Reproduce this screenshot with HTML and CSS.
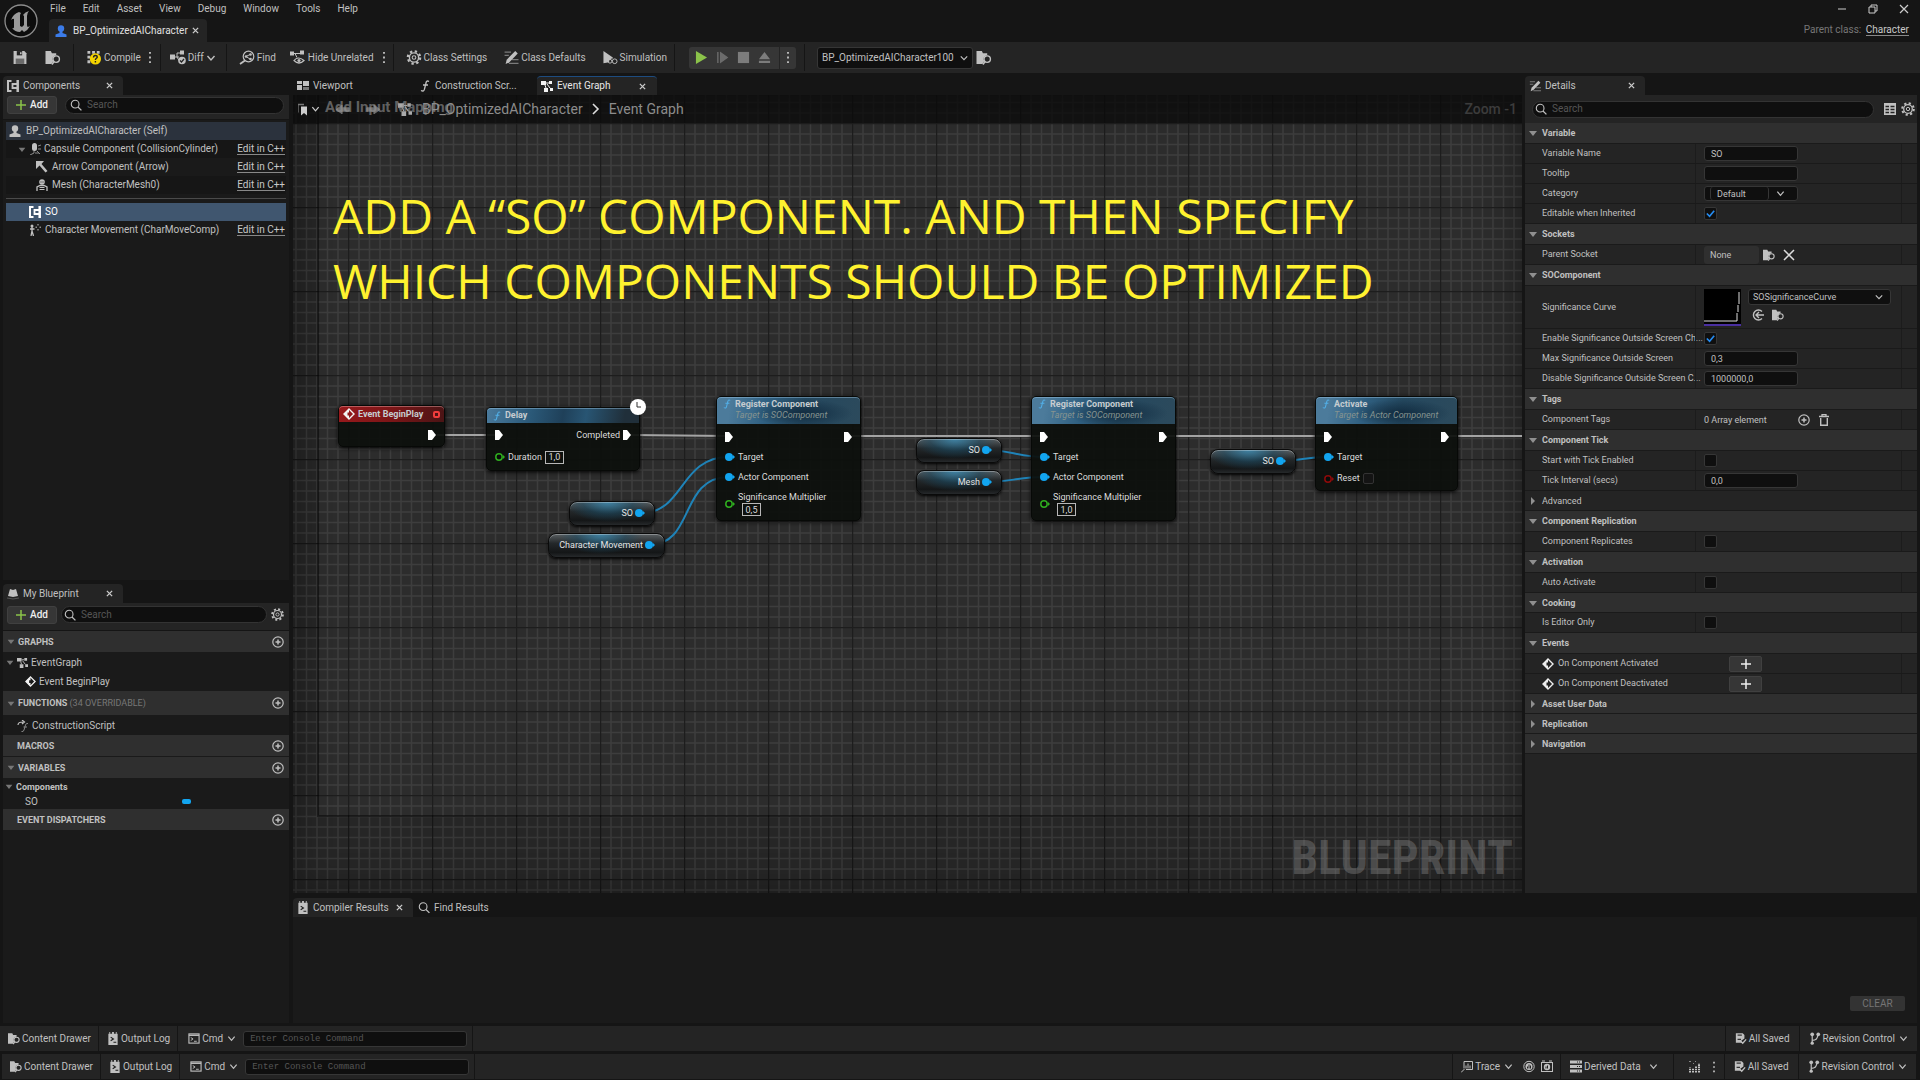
FILE: index.html
```html
<!DOCTYPE html>
<html lang="en">
<head>
    <meta charset="utf-8">
    <title>BP_OptimizedAICharacter</title>
    <link rel="stylesheet" href="styles.css">
</head>
<body>

<!-- Icon set -->
<svg class="icon-defs" aria-hidden="true">
    <defs>
        <symbol id="i-close" viewBox="0 0 8 8"><path d="M1 1l6 6M7 1l-6 6" stroke="currentColor" stroke-width="1.5" fill="none"/></symbol>
        <symbol id="i-chev" viewBox="0 0 10 10"><path d="M1.5 3l3.500 4 3.500-4" stroke="currentColor" stroke-width="1.400" fill="none"/></symbol>
        <symbol id="i-dots" viewBox="0 0 4 14"><path d="M1 1h2v2H1zM1 6h2v2H1zM1 11h2v2H1z" fill="currentColor"/></symbol>
        <symbol id="i-down" viewBox="0 0 8 6"><path d="M0 1h8L4 6z" fill="currentColor"/></symbol>
        <symbol id="i-right" viewBox="0 0 6 8"><path d="M1 0v8l4-4z" fill="currentColor"/></symbol>
        <symbol id="i-search" viewBox="0 0 14 14"><circle cx="6" cy="6" r="4.500" fill="none" stroke="currentColor" stroke-width="1.300"/><path d="M9.300 9.300l4 4" stroke="currentColor" stroke-width="1.500"/></symbol>
        <symbol id="i-plus" viewBox="0 0 10 10"><path d="M5 0v10M0 5h10" stroke="currentColor" stroke-width="1.500"/></symbol>
        <symbol id="i-addcircle" viewBox="0 0 12 12"><circle cx="6" cy="6" r="5.200" fill="none" stroke="currentColor" stroke-width="1.200"/><path d="M6 3.500v5M3.500 6h5" stroke="currentColor" stroke-width="1.500"/></symbol>
        <symbol id="i-gear" viewBox="0 0 14 14"><circle cx="7" cy="7" r="5.800" fill="none" stroke="currentColor" stroke-width="2" stroke-dasharray="2.200 2.355"/><circle cx="7" cy="7" r="4.300" fill="none" stroke="currentColor" stroke-width="1.300"/><circle cx="7" cy="7" r="1.700" fill="none" stroke="currentColor" stroke-width="1"/></symbol>
        <symbol id="i-save" viewBox="0 0 14 14"><path d="M1 1h10l2 2v10H1z" fill="currentColor"/><path d="M4 1h5v4H4z" fill="#242424"/><path d="M7 2h1.500v2H7z" fill="currentColor"/><path d="M3 8h8v5H3z" fill="#6a6a6a"/></symbol>
        <symbol id="i-folder" viewBox="0 0 14 14"><path d="M0 1h5l1 2h4v2a4 4 0 0 0-3.500 4l1 1-2 3H0z" fill="currentColor"/><circle cx="10" cy="8.500" r="3" fill="none" stroke="currentColor" stroke-width="1.300"/><path d="M8 10.700L6 13.500" stroke="currentColor" stroke-width="1.500"/></symbol>
        <symbol id="i-compile" viewBox="0 0 16 16"><path d="M1 1h3v3H1zM6 1h3v3H6zM11 1h3v3h-3zM1 6h3v3H1zM1 11h3v3H1z" fill="currentColor"/><circle cx="9.500" cy="9.500" r="6" fill="#f5d400"/><path d="M7.500 8c0-3 4-2.500 4-.5 0 1.500-2 1.200-2 3.100M9.500 11.800v1.500" stroke="#222" stroke-width="1.500" fill="none"/></symbol>
        <symbol id="i-diff" viewBox="0 0 16 14"><path d="M0 4h5v5H0zM10 0h4v4h-4z" fill="currentColor"/><path d="M5 6.500h4M7 6.500v-4h3M7 6.500L9 10" stroke="currentColor" fill="none"/><circle cx="12" cy="10" r="3.800" fill="currentColor"/><path d="M10 10l1.500 1.500L14 8.500" stroke="#222" stroke-width="1.200" fill="none"/></symbol>
        <symbol id="i-find" viewBox="0 0 16 14"><circle cx="9.500" cy="6" r="5.300" fill="none" stroke="currentColor" stroke-width="1.200"/><path d="M6 10L1 13.500" stroke="currentColor" stroke-width="1.800"/><path d="M7 6l4-2M7 6l4 2.500" stroke="currentColor" fill="none"/><circle cx="7" cy="6" r="1.300" fill="currentColor"/><circle cx="11.500" cy="4" r="1.300" fill="currentColor"/><circle cx="11.500" cy="8.500" r="1.300" fill="currentColor"/></symbol>
        <symbol id="i-hide" viewBox="0 0 16 14"><path d="M0 1h4v4H0zM10 0h4v4h-4z" fill="currentColor"/><path d="M4 3h6M5 3l2 4" stroke="currentColor" fill="none"/><path d="M4 10q4-5 10 0q-5 5-10 0z" fill="none" stroke="currentColor" stroke-width="1.200"/><circle cx="9" cy="10" r="1.600" fill="currentColor"/></symbol>
        <symbol id="i-pencil" viewBox="0 0 14 14"><path d="M1 2h6M1 5h4M8 9h6M5 12.500h9" stroke="#7a7a7a" stroke-width="1.200"/><path d="M2 13l1-4L11 1l2.300 2.300L5.500 11.500z" fill="currentColor"/></symbol>
        <symbol id="i-sim" viewBox="0 0 16 16"><path d="M1 1l10 7v1a4 4 0 0 0-4 4l-6 1z" fill="currentColor"/><circle cx="8" cy="12" r="2" fill="none" stroke="currentColor"/><circle cx="13" cy="12" r="2.500" fill="none" stroke="currentColor"/></symbol>
        <symbol id="i-person" viewBox="0 0 12 12"><circle cx="6" cy="3.500" r="3.200" fill="currentColor"/><path d="M4.500 6h3v2l4 1.500V12H.5V9.500l4-1.500z" fill="currentColor"/></symbol>
        <symbol id="i-comp" viewBox="0 0 12 12"><path d="M4.500 1H1v10h3.500" fill="none" stroke="currentColor" stroke-width="2"/><path d="M10.700 0v12" stroke="currentColor" stroke-width="2.500"/><path d="M10 4H5.500v4H10" fill="none" stroke="currentColor" stroke-width="1.800"/></symbol>
        <symbol id="i-capsule" viewBox="0 0 12 12"><rect x="3" y="0" width="5" height="8" rx="2.500" fill="currentColor"/><path d="M5 8v2l-4 2M6 10h4M9 3l3-1M9 6h3M8 8l3 3" stroke="#8a8a8a" fill="none"/></symbol>
        <symbol id="i-arrow" viewBox="0 0 12 12"><path d="M0 0h8L5.500 3l6 7-2 1.500-6-7L0 8z" fill="currentColor"/></symbol>
        <symbol id="i-mesh" viewBox="0 0 12 12"><circle cx="6" cy="3" r="2.800" fill="currentColor"/><path d="M4.500 3h1M6.500 3h1" stroke="#222"/><path d="M1 12V8l3-1.500h4L11 8v4" fill="none" stroke="currentColor" stroke-width="1.300"/><path d="M3.500 8.500h5M3.500 10.500h5" stroke="currentColor"/></symbol>
        <symbol id="i-move" viewBox="0 0 12 12"><circle cx="3" cy="2" r="1.500" fill="currentColor"/><path d="M3 3v5M1 5h4.500M3 7l-1 5M3 7l1.500 5" stroke="currentColor" stroke-width="1.300" fill="none"/><path d="M9 0v1.500M9 5v1.500M6.500 3.200H8M10.500 3.200H12" stroke="currentColor"/></symbol>
        <symbol id="i-book" viewBox="0 0 12 12"><path d="M1 8L3 1l3 1 3-1 2 7-5 1z" fill="currentColor"/><path d="M0 10l6 1 6-1" stroke="#555" fill="none"/></symbol>
        <symbol id="i-graph" viewBox="0 0 12 12"><path d="M0 1h5v4H0zM8 1h3v3H8zM3 8h4v4H3zM9 8h3v3H9z" fill="currentColor"/><path d="M5 3h3M4 5l1 3M6 4l3 4" stroke="currentColor" fill="none"/></symbol>
        <symbol id="i-event" viewBox="0 0 12 12"><path d="M6 1l5 5-5 5-5-5z" fill="none" stroke="currentColor" stroke-width="1.400"/><path d="M1 6l5-5v3.500H4.500v3H6V11z" fill="currentColor"/></symbol>
        <symbol id="i-func" viewBox="0 0 10 12"><path d="M9 1.500Q6.500 0 6 3L4.500 9Q4 12 1 10.500M3 5h5" stroke="currentColor" stroke-width="1.300" fill="none"/></symbol>
        <symbol id="i-cfunc" viewBox="0 0 12 12"><path d="M1 5Q1 2 6 2M5 0l2.500 2L5 4" stroke="currentColor" stroke-width="1.200" fill="none"/><path d="M11 3.500Q9 3 8.500 5L7 10Q6.500 12 4.500 11.500M6.500 7H10" stroke="#888" fill="none"/></symbol>
        <symbol id="i-viewport" viewBox="0 0 12 10"><path d="M0 0h5v3H0zM0 4h5v5H0zM6 0h6v5H6z" fill="currentColor"/><path d="M6 6h6v3H6z" fill="#777"/></symbol>
        <symbol id="i-log" viewBox="0 0 12 14"><path d="M1 2h1V0h1v2h2V0h2v2h2V0h1v2h1v12H1z" fill="currentColor"/><path d="M3.500 5.500l3 2-3 2M6.500 11h3" stroke="#1c1c1c" stroke-width="1.200" fill="none"/></symbol>
        <symbol id="i-cmd" viewBox="0 0 13 12"><rect x="1" y="1" width="11" height="10" fill="none" stroke="currentColor" stroke-width="1.200"/><path d="M1 2.500h11" stroke="currentColor" stroke-width="1.500"/><path d="M3 5l2.500 1.500L3 8.200M6.500 9H9.500" stroke="currentColor" fill="none"/></symbol>
        <symbol id="i-saved" viewBox="0 0 14 14"><path d="M1 1h8l2 2v4l-4 3 2 2H1z" fill="currentColor"/><path d="M3 3h5M3 8h4" stroke="#333" stroke-width="1.300"/><path d="M6.500 10l2.500 2.500L13 8" stroke="currentColor" stroke-width="1.600" fill="none"/></symbol>
        <symbol id="i-branch" viewBox="0 0 12 14"><path d="M3 2v10M3 9q6 0 6-6" stroke="currentColor" stroke-width="1.300" fill="none"/><circle cx="3" cy="2.500" r="2" fill="currentColor"/><circle cx="9.500" cy="2.500" r="2" fill="currentColor"/><circle cx="3" cy="12" r="1.800" fill="currentColor"/></symbol>
        <symbol id="i-trace" viewBox="0 0 12 12"><path d="M3 8V1h8.500v8H5" stroke="currentColor" fill="none"/><path d="M5 8V5M7 8V3M9 8V5M0 12l3.500-3.500" stroke="currentColor"/></symbol>
        <symbol id="i-rec" viewBox="0 0 12 12"><circle cx="6" cy="6" r="5.200" fill="none" stroke="currentColor"/><circle cx="6" cy="6" r="3.500" fill="currentColor"/><path d="M4.500 8V6M6 8V4M7.500 8V5" stroke="#222"/></symbol>
        <symbol id="i-camera" viewBox="0 0 12 12"><rect x=".5" y="2" width="11" height="9" fill="none" stroke="currentColor"/><path d="M1 .5h3M8 .5h3" stroke="currentColor"/><circle cx="6" cy="6.500" r="3.200" fill="currentColor"/><path d="M5 8V6M6.500 8V5" stroke="#222"/></symbol>
        <symbol id="i-data" viewBox="0 0 12 12"><path d="M0 0h12v3H0zM0 4.500h12v3H0zM0 9h12v3H0z" fill="currentColor"/><path d="M7 1.500h1M9 1.500h1M7 6h1M9 6h1M7 10.500h1M9 10.500h1" stroke="#222"/></symbol>
        <symbol id="i-bars" viewBox="0 0 12 12"><path d="M2 12V7M5 12V8M8 12V6M11 12V3" stroke="currentColor" stroke-width="2" stroke-dasharray="1.600 .6"/><path d="M1 1h2M5 3h1M7 1h1" stroke="#888"/></symbol>
        <symbol id="i-table" viewBox="0 0 12 12"><path d="M0 0h12v12H0z" fill="currentColor"/><path d="M1.500 3.500h3.500M6.500 3.500h4M1.500 6.500h3.500M6.500 6.500h4M1.500 9.500h3.500M6.500 9.500h4" stroke="#242424" stroke-width="1.500"/></symbol>
        <symbol id="i-use" viewBox="0 0 12 12"><path d="M10 2.500A5 5 0 1 0 10 9.500M12 6H4M7 3L4 6l3 3" stroke="currentColor" stroke-width="1.400" fill="none"/></symbol>
        <symbol id="i-trash" viewBox="0 0 10 12"><path d="M0 2.500h10M3 2V.7h4V2" stroke="currentColor" stroke-width="1.300" fill="none"/><path d="M1.700 4v7.300h6.600V4" stroke="currentColor" stroke-width="1.400" fill="none"/></symbol>
        <symbol id="i-book2" viewBox="0 0 10 12"><path d="M0 9V1h6" stroke="#777" stroke-width="1.300" fill="none"/><path d="M3 3h6v9L6 9.500 3 12z" fill="currentColor"/></symbol>
        <symbol id="i-back" viewBox="0 0 16 10"><path d="M7 0v3h8v4H7v3L0 5z" fill="currentColor" stroke="currentColor" stroke-linejoin="round"/></symbol>
        <symbol id="i-exec" viewBox="0 0 8 10"><path d="M0 0h4l4 5-4 5H0z" fill="#fff"/></symbol>
        <symbol id="i-dot" viewBox="0 0 10 10"><circle cx="4" cy="5" r="4" fill="currentColor"/><path d="M8 3l2 2-2 2z" fill="currentColor"/></symbol>
        <symbol id="i-ring" viewBox="0 0 10 10"><circle cx="4" cy="5" r="3.200" fill="#0a0c0a" stroke="currentColor" stroke-width="1.500"/><path d="M8 3l2 2-2 2z" fill="currentColor"/></symbol>
    </defs>
</svg>

<header class="titlebar">
    <svg class="logo" viewBox="0 0 34 34" aria-label="Unreal Engine" role="img">
        <circle cx="17" cy="17" r="16" fill="#0c0c0c" stroke="#8c8c8c" stroke-width="1.300"/>
        <path d="M15 8q-6 2-8 8 2-2 3-1v8q0 2-2 1 3 4 8 4l2-2 2 2q4-2 6-6l-2 1q-1 0-1-2v-9q0-3 2-5-4 1-6 4l1 1v9l-2 2-2-1V12q0-2 1-3z" fill="#9a9a9a"/>
    </svg>
    <div class="titlebar-main">
        <nav class="menu">
            <button>File</button><button>Edit</button><button>Asset</button><button>View</button><button>Debug</button><button>Window</button><button>Tools</button><button>Help</button>
        </nav>
        <div class="asset-tab">
            <svg class="icon blue"><use href="#i-person"/></svg>
            <span>BP_OptimizedAICharacter</span>
            <button class="close" aria-label="Close asset"><svg><use href="#i-close"/></svg></button>
        </div>
    </div>
    <div class="titlebar-right">
        <div class="window-buttons">
            <button aria-label="Minimize"><svg viewBox="0 0 10 10"><path d="M1 5h8" stroke="#ccc"/></svg></button>
            <button aria-label="Restore"><svg viewBox="0 0 10 10"><path d="M1 3h6v6H1zM3 3V1h6v6H7" fill="none" stroke="#ccc"/></svg></button>
            <button aria-label="Close"><svg viewBox="0 0 10 10"><path d="M1 1l8 8M9 1L1 9" stroke="#ccc" stroke-width="1.200"/></svg></button>
        </div>
        <p class="parent-class">Parent class: <a href="#">Character</a></p>
    </div>
</header>

<div class="toolbar">
    <div class="tool-group files">
        <button aria-label="Save"><svg><use href="#i-save"/></svg></button>
        <button aria-label="Browse"><svg><use href="#i-folder"/></svg></button>
    </div>
    <div class="tool-group compile">
        <button><svg><use href="#i-compile"/></svg>Compile</button>
        <button class="dots" aria-label="Compile options"><svg><use href="#i-dots"/></svg></button>
    </div>
    <div class="tool-group diff">
        <button><svg><use href="#i-diff"/></svg>Diff<svg class="chev"><use href="#i-chev"/></svg></button>
    </div>
    <div class="tool-group find">
        <button><svg><use href="#i-find"/></svg>Find</button>
        <button class="hide"><svg><use href="#i-hide"/></svg>Hide Unrelated</button>
        <button class="dots" aria-label="Hide options"><svg><use href="#i-dots"/></svg></button>
    </div>
    <div class="tool-group settings">
        <button><svg><use href="#i-gear"/></svg>Class Settings</button>
        <button><svg><use href="#i-pencil"/></svg>Class Defaults</button>
        <button><svg><use href="#i-sim"/></svg>Simulation</button>
    </div>
    <div class="tool-group playing">
        <div class="play-box">
            <button aria-label="Play"><svg viewBox="0 0 14 14"><path d="M1 0v14l12-7z" fill="#8bc34a"/></svg></button>
            <button aria-label="Step"><svg viewBox="0 0 14 14"><path d="M2 1v12M5 2v10l7-5z" fill="#6c6c6c" stroke="#6c6c6c" stroke-width="1.500"/></svg></button>
            <button aria-label="Stop"><svg viewBox="0 0 14 14"><path d="M1 1h12v12H1z" fill="#7c7c7c"/></svg></button>
            <button aria-label="Eject"><svg viewBox="0 0 14 14"><path d="M7 1l6 8H1zM1 10.500h12v2.500H1z" fill="#7c7c7c"/></svg></button>
            <button class="dots" aria-label="Play options"><svg><use href="#i-dots"/></svg></button>
        </div>
    </div>
    <div class="tool-group debug">
        <select class="select debug-select" aria-label="Debug object"><option>BP_OptimizedAICharacter100</option></select>
        <button aria-label="Browse to object"><svg><use href="#i-folder"/></svg></button>
    </div>
</div>

<div class="workspace">

    <aside class="left">
        <section class="panel components">
            <div class="tabs"><div class="tab active side-tab"><svg class="icon"><use href="#i-comp"/></svg><span>Components</span><button class="close" aria-label="Close Components"><svg><use href="#i-close"/></svg></button></div></div>
            <div class="panel-head">
                <button class="add"><svg><use href="#i-plus"/></svg>Add</button>
                <label class="search"><svg><use href="#i-search"/></svg><input type="search" placeholder="Search" aria-label="Search components"></label>
            </div>
            <ul class="tree">
                <li class="self"><svg class="icon"><use href="#i-person"/></svg><span>BP_OptimizedAICharacter (Self)</span></li>
                <li class="level-1 alt"><svg class="arrow"><use href="#i-down"/></svg><svg class="icon"><use href="#i-capsule"/></svg><span>Capsule Component (CollisionCylinder)</span><a href="#">Edit in C++</a></li>
                <li class="level-2"><svg class="icon"><use href="#i-arrow"/></svg><span>Arrow Component (Arrow)</span><a href="#">Edit in C++</a></li>
                <li class="level-2 alt"><svg class="icon"><use href="#i-mesh"/></svg><span>Mesh (CharacterMesh0)</span><a href="#">Edit in C++</a></li>
                <li class="split"></li>
                <li class="child selected"><svg class="icon"><use href="#i-comp"/></svg><span>SO</span></li>
                <li class="child"><svg class="icon"><use href="#i-move"/></svg><span>Character Movement (CharMoveComp)</span><a href="#">Edit in C++</a></li>
            </ul>
        </section>

        <section class="panel blueprint">
            <div class="tabs"><div class="tab active side-tab"><svg class="icon"><use href="#i-book"/></svg><span>My Blueprint</span><button class="close" aria-label="Close My Blueprint"><svg><use href="#i-close"/></svg></button></div></div>
            <div class="panel-head">
                <button class="add"><svg><use href="#i-plus"/></svg>Add</button>
                <label class="search"><svg><use href="#i-search"/></svg><input type="search" placeholder="Search" aria-label="Search blueprint"></label>
                <button class="gear" aria-label="Settings"><svg><use href="#i-gear"/></svg></button>
            </div>
            <div class="cat"><svg class="arrow"><use href="#i-down"/></svg><h2>GRAPHS</h2><button aria-label="Add graph"><svg><use href="#i-addcircle"/></svg></button></div>
            <ul class="cat-list">
                <li class="graph-row"><svg class="arrow"><use href="#i-down"/></svg><svg class="icon"><use href="#i-graph"/></svg>EventGraph</li>
                <li class="event-row"><svg class="icon white"><use href="#i-event"/></svg>Event BeginPlay</li>
            </ul>
            <div class="cat tall"><svg class="arrow"><use href="#i-down"/></svg><h2>FUNCTIONS <small>(34 OVERRIDABLE)</small></h2><button aria-label="Add function"><svg><use href="#i-addcircle"/></svg></button></div>
            <ul class="cat-list">
                <li class="func-row"><svg class="icon"><use href="#i-cfunc"/></svg>ConstructionScript</li>
            </ul>
            <div class="cat no-arrow"><h2>MACROS</h2><button aria-label="Add macro"><svg><use href="#i-addcircle"/></svg></button></div>
            <div class="cat"><svg class="arrow"><use href="#i-down"/></svg><h2>VARIABLES</h2><button aria-label="Add variable"><svg><use href="#i-addcircle"/></svg></button></div>
            <ul class="cat-list vars">
                <li class="var-cat"><svg class="arrow"><use href="#i-down"/></svg>Components</li>
                <li class="var-row"><span>SO</span><i class="var-type"></i></li>
            </ul>
            <div class="cat no-arrow"><h2>EVENT DISPATCHERS</h2><button aria-label="Add dispatcher"><svg><use href="#i-addcircle"/></svg></button></div>
        </section>
    </aside>

    <div class="right">
        <div class="upper">
            <main class="graph-area">
                <div class="tabs">
                    <div class="tab doc-tab"><svg class="icon"><use href="#i-viewport"/></svg><span>Viewport</span></div>
                    <div class="tab doc-tab"><svg class="icon"><use href="#i-func"/></svg><span>Construction Scr...</span></div>
                    <div class="tab doc-tab active current"><svg class="icon white"><use href="#i-graph"/></svg><span>Event Graph</span><button class="close" aria-label="Close Event Graph"><svg><use href="#i-close"/></svg></button></div>
                </div>
                <div class="canvas">
                    <svg class="grid" aria-hidden="true">
                        <defs>
                            <pattern id="cells" x="55" y="28" width="84" height="84" patternUnits="userSpaceOnUse" viewBox="0 0 168 168">
                                <path d="M22 0v168M43 0v168M64 0v168M85 0v168M106 0v168M127 0v168M148 0v168M0 22h168M0 43h168M0 64h168M0 85h168M0 106h168M0 127h168M0 148h168" stroke="#373737" stroke-width="3"/>
                                <path d="M1 0v168M0 1h168" stroke="#161616" stroke-width="3"/>
                            </pattern>
                        </defs>
                        <rect width="100%" height="100%" fill="url(#cells)"/>
                    </svg>
                    <div class="comment"></div>
                    <div class="vignette"></div>
                    <p class="headline">ADD A “SO” COMPONENT. AND THEN SPECIFY<br>WHICH COMPONENTS SHOULD BE OPTIMIZED</p>
                    <p class="watermark">BLUEPRINT</p>

                    <!-- Wires between the pins -->
                    <svg class="wires" aria-hidden="true">
                        <g fill="none" stroke="#a4a4a4" stroke-width="2">
                            <path d="M144 340H204M338 340L436 341M559 341H751M874 341H1034M1156 341H3000"/>
                        </g>
                        <g fill="none" stroke="#1f83b8" stroke-width="2">
                            <path d="M348 418C392 418 386 362 436 362"/>
                            <path d="M356 450C402 450 386 382 436 382"/>
                            <path d="M694 355C716 355 726 362 751 362"/>
                            <path d="M694 387C716 387 726 382 751 382"/>
                            <path d="M988 366C1008 366 1012 362 1034 362"/>
                        </g>
                    </svg>

                    <article class="node n-event">
                        <header><svg class="icon white"><use href="#i-event"/></svg><h3>Event BeginPlay</h3><i class="delegate"></i></header>
                        <div class="pins"><div class="pin end"><svg class="exec"><use href="#i-exec"/></svg></div></div>
                    </article>

                    <article class="node n-delay">
                        <header><svg class="fn"><use href="#i-func"/></svg><h3>Delay</h3></header>
                        <svg class="clock" viewBox="0 0 16 16"><circle cx="8" cy="8" r="8" fill="#fff"/><path d="M7 3v5h4" stroke="#333" fill="none"/></svg>
                        <div class="pins">
                            <div class="pin"><svg class="exec"><use href="#i-exec"/></svg><span class="push">Completed</span><svg class="exec"><use href="#i-exec"/></svg></div>
                            <div class="pin"><svg class="dot green"><use href="#i-ring"/></svg><label for="duration">Duration</label><input id="duration" class="pin-value" value="1,0"></div>
                        </div>
                    </article>

                    <article class="node n-register-1">
                        <header class="two"><svg class="fn"><use href="#i-func"/></svg><div><h3>Register Component</h3><p>Target is SOComponent</p></div></header>
                        <div class="pins">
                            <div class="pin"><svg class="exec"><use href="#i-exec"/></svg><svg class="exec push"><use href="#i-exec"/></svg></div>
                            <div class="pin"><svg class="dot sky"><use href="#i-dot"/></svg><span>Target</span></div>
                            <div class="pin"><svg class="dot sky"><use href="#i-dot"/></svg><span>Actor Component</span></div>
                            <div class="pin stacked"><svg class="dot green"><use href="#i-ring"/></svg><div><label for="sig-1">Significance Multiplier</label><input id="sig-1" class="pin-value" value="0,5"></div></div>
                        </div>
                    </article>

                    <article class="node n-register-2">
                        <header class="two"><svg class="fn"><use href="#i-func"/></svg><div><h3>Register Component</h3><p>Target is SOComponent</p></div></header>
                        <div class="pins">
                            <div class="pin"><svg class="exec"><use href="#i-exec"/></svg><svg class="exec push"><use href="#i-exec"/></svg></div>
                            <div class="pin"><svg class="dot sky"><use href="#i-dot"/></svg><span>Target</span></div>
                            <div class="pin"><svg class="dot sky"><use href="#i-dot"/></svg><span>Actor Component</span></div>
                            <div class="pin stacked"><svg class="dot green"><use href="#i-ring"/></svg><div><label for="sig-2">Significance Multiplier</label><input id="sig-2" class="pin-value" value="1,0"></div></div>
                        </div>
                    </article>

                    <article class="node n-activate">
                        <header class="two"><svg class="fn"><use href="#i-func"/></svg><div><h3>Activate</h3><p>Target is Actor Component</p></div></header>
                        <div class="pins">
                            <div class="pin"><svg class="exec"><use href="#i-exec"/></svg><svg class="exec push"><use href="#i-exec"/></svg></div>
                            <div class="pin"><svg class="dot sky"><use href="#i-dot"/></svg><span>Target</span></div>
                            <div class="pin reset"><svg class="dot red"><use href="#i-ring"/></svg><label for="reset">Reset</label><input id="reset" type="checkbox" class="pin-check"></div>
                        </div>
                    </article>

                    <div class="pill p-so-1"><span>SO</span><svg class="dot sky"><use href="#i-dot"/></svg></div>
                    <div class="pill p-move"><span>Character Movement</span><svg class="dot sky"><use href="#i-dot"/></svg></div>
                    <div class="pill p-so-2"><span>SO</span><svg class="dot sky"><use href="#i-dot"/></svg></div>
                    <div class="pill p-mesh"><span>Mesh</span><svg class="dot sky"><use href="#i-dot"/></svg></div>
                    <div class="pill p-so-3"><span>SO</span><svg class="dot sky"><use href="#i-dot"/></svg></div>

                    <div class="crumbs">
                        <button aria-label="Bookmarks"><svg class="mark"><use href="#i-book2"/></svg><svg class="chev"><use href="#i-chev"/></svg></button>
                        <button class="history" aria-label="Back"><svg><use href="#i-back"/></svg></button>
                        <button class="history next" aria-label="Forward"><svg><use href="#i-back"/></svg></button>
                        <svg class="crumb-icon"><use href="#i-graph"/></svg>
                        <span>BP_OptimizedAICharacter</span>
                        <svg class="crumb-sep" viewBox="0 0 8 12"><path d="M1 1l5 5-5 5" fill="none" stroke="#ddd" stroke-width="1.600"/></svg>
                        <span>Event Graph</span>
                        <span class="zoom">Zoom -1</span>
                    </div>
                    <p class="comment-title">Add Input Mapping</p>
                </div>
            </main>

            <section class="details">
                <div class="tabs"><div class="tab active side-tab"><svg class="icon"><use href="#i-pencil"/></svg><span>Details</span><button class="close" aria-label="Close Details"><svg><use href="#i-close"/></svg></button></div></div>
                <div class="details-body">
                    <div class="details-head">
                        <label class="search"><svg><use href="#i-search"/></svg><input type="search" placeholder="Search" aria-label="Search details"></label>
                        <button aria-label="Property matrix"><svg class="small"><use href="#i-table"/></svg></button>
                        <button aria-label="Settings"><svg><use href="#i-gear"/></svg></button>
                    </div>

                    <h2 class="group"><svg><use href="#i-down"/></svg>Variable</h2>
                    <div class="prop"><label for="var-name">Variable Name</label><div><input id="var-name" class="field" value="SO"></div></div>
                    <div class="prop"><label for="tooltip">Tooltip</label><div><input id="tooltip" class="field"></div></div>
                    <div class="prop"><label for="category">Category</label><div><div class="category-box"><input id="category" value="Default"><button aria-label="Pick category"><svg><use href="#i-chev"/></svg></button></div></div></div>
                    <div class="prop"><label for="inherited">Editable when Inherited</label><div><input id="inherited" type="checkbox" class="check" checked></div></div>

                    <h2 class="group"><svg><use href="#i-down"/></svg>Sockets</h2>
                    <div class="prop"><span>Parent Socket</span><div><button class="socket">None</button><button class="mini" aria-label="Browse socket"><svg><use href="#i-folder"/></svg></button><button class="mini" aria-label="Clear socket"><svg viewBox="0 0 12 12"><path d="M1 1l10 10M11 1L1 11" stroke="#ddd" stroke-width="1.500"/></svg></button></div></div>

                    <h2 class="group"><svg><use href="#i-down"/></svg>SOComponent</h2>
                    <div class="prop curve"><label for="curve">Significance Curve</label>
                        <div>
                            <svg class="thumb" viewBox="0 0 37 37"><path d="M0 0h37v37H0z" fill="#000"/><path d="M0 32h33V24M34 23V16M35 15V3" stroke="#ddd" fill="none"/><path d="M0 35h37v2H0z" fill="#4a2fa0"/></svg>
                            <div class="curve-pick">
                                <select id="curve" class="select curve-select"><option>SOSignificanceCurve</option></select>
                                <div><button class="mini" aria-label="Use selected"><svg><use href="#i-use"/></svg></button><button class="mini" aria-label="Browse to asset"><svg><use href="#i-folder"/></svg></button></div>
                            </div>
                        </div>
                    </div>
                    <div class="prop"><label for="enable-sig">Enable Significance Outside Screen Ch...</label><div><input id="enable-sig" type="checkbox" class="check" checked></div></div>
                    <div class="prop"><label for="max-sig">Max Significance Outside Screen</label><div><input id="max-sig" class="field" value="0,3"></div></div>
                    <div class="prop"><label for="dis-sig">Disable Significance Outside Screen C...</label><div><input id="dis-sig" class="field" value="1000000,0"></div></div>

                    <h2 class="group"><svg><use href="#i-down"/></svg>Tags</h2>
                    <div class="prop"><span>Component Tags</span><div><span class="count">0 Array element</span><button class="mini" aria-label="Add element"><svg><use href="#i-addcircle"/></svg></button><button class="mini" aria-label="Remove all"><svg><use href="#i-trash"/></svg></button></div></div>

                    <h2 class="group"><svg><use href="#i-down"/></svg>Component Tick</h2>
                    <div class="prop"><label for="start-tick">Start with Tick Enabled</label><div><input id="start-tick" type="checkbox" class="check"></div></div>
                    <div class="prop"><label for="tick-int">Tick Interval (secs)</label><div><input id="tick-int" class="field" value="0,0"></div></div>
                    <div class="advanced"><svg><use href="#i-right"/></svg>Advanced</div>

                    <h2 class="group"><svg><use href="#i-down"/></svg>Component Replication</h2>
                    <div class="prop"><label for="replicates">Component Replicates</label><div><input id="replicates" type="checkbox" class="check"></div></div>

                    <h2 class="group"><svg><use href="#i-down"/></svg>Activation</h2>
                    <div class="prop"><label for="auto-act">Auto Activate</label><div><input id="auto-act" type="checkbox" class="check"></div></div>

                    <h2 class="group folded"><svg class="open"><use href="#i-down"/></svg>Cooking</h2>
                    <div class="prop"><label for="editor-only">Is Editor Only</label><div><input id="editor-only" type="checkbox" class="check"></div></div>

                    <h2 class="group"><svg><use href="#i-down"/></svg>Events</h2>
                    <div class="prop event"><span><svg><use href="#i-event"/></svg>On Component Activated</span><div><button class="bind" aria-label="Add On Component Activated"><svg><use href="#i-plus"/></svg></button></div></div>
                    <div class="prop event"><span><svg><use href="#i-event"/></svg>On Component Deactivated</span><div><button class="bind" aria-label="Add On Component Deactivated"><svg><use href="#i-plus"/></svg></button></div></div>

                    <h2 class="group folded"><svg><use href="#i-right"/></svg>Asset User Data</h2>
                    <h2 class="group folded"><svg><use href="#i-right"/></svg>Replication</h2>
                    <h2 class="group folded"><svg><use href="#i-right"/></svg>Navigation</h2>
                </div>
            </section>
        </div>

        <section class="results">
            <div class="tabs">
                <div class="tab active results-tab"><svg class="icon"><use href="#i-log"/></svg><span>Compiler Results</span><button class="close" aria-label="Close Compiler Results"><svg><use href="#i-close"/></svg></button></div>
                <div class="tab find-tab"><svg class="icon"><use href="#i-search"/></svg><span>Find Results</span></div>
            </div>
            <div class="results-body"><button class="clear">CLEAR</button></div>
        </section>
    </div>
</div>

<footer class="status">
    <button><svg><use href="#i-folder"/></svg>Content Drawer</button>
    <button><svg><use href="#i-log"/></svg>Output Log</button>
    <div class="console">
        <button><svg><use href="#i-cmd"/></svg>Cmd<svg class="chev"><use href="#i-chev"/></svg></button>
        <input placeholder="Enter Console Command" aria-label="Console command">
    </div>
    <div class="status-end">
        <button><svg><use href="#i-saved"/></svg>All Saved</button>
        <button><svg><use href="#i-branch"/></svg>Revision Control<svg class="chev"><use href="#i-chev"/></svg></button>
    </div>
</footer>

<footer class="status main-window">
    <button><svg><use href="#i-folder"/></svg>Content Drawer</button>
    <button><svg><use href="#i-log"/></svg>Output Log</button>
    <div class="console">
        <button><svg><use href="#i-cmd"/></svg>Cmd<svg class="chev"><use href="#i-chev"/></svg></button>
        <input placeholder="Enter Console Command" aria-label="Main window console command">
    </div>
    <div class="status-end">
        <div class="trace">
            <button><svg><use href="#i-trace"/></svg>Trace<svg class="chev"><use href="#i-chev"/></svg></button>
            <button aria-label="Record trace"><svg><use href="#i-rec"/></svg></button>
            <button aria-label="Trace snapshot"><svg><use href="#i-camera"/></svg></button>
        </div>
        <button class="derived"><svg><use href="#i-data"/></svg>Derived Data<svg class="chev"><use href="#i-chev"/></svg></button>
        <div class="stats">
            <button aria-label="Statistics"><svg><use href="#i-bars"/></svg></button>
            <button aria-label="More"><svg class="more"><use href="#i-dots"/></svg></button>
        </div>
        <button><svg><use href="#i-saved"/></svg>All Saved</button>
        <button><svg><use href="#i-branch"/></svg>Revision Control<svg class="chev"><use href="#i-chev"/></svg></button>
    </div>
</footer>

</body>
</html>
```
FILE: styles.css
```css
* {
    box-sizing: border-box;
}
body {
    margin: 0;
    height: 100vh;
    display: flex;
    flex-direction: column;
    background-color: #151515;
    color: #c0c0c0;
    font-family: Roboto, "Liberation Sans", sans-serif;
    font-size: 10px;
    line-height: 14px;
    overflow: hidden;
}
h2, h3, p, ul {
    margin: 0;
    padding: 0;
    font-size: inherit;
}
ul {
    list-style: none;
}
svg {
    flex: none;
    display: block;
}
button, input, select {
    font: inherit;
    color: inherit;
    margin: 0;
    padding: 0;
    border: 0;
    background: none;
}
button {
    display: flex;
    align-items: center;
}
input {
    min-width: 0;
}
.icon-defs {
    position: absolute;
    width: 0;
    height: 0;
}
.icon {
    width: 12px;
    height: 12px;
}
.white {
    color: #f4f4f4;
}
.blue {
    color: #3b7be8;
}
.chev {
    width: 10px;
    height: 10px;
}

/* Title bar */
.titlebar {
    display: flex;
    height: 42px;
    flex: none;
}
.logo {
    width: 34px;
    height: 34px;
    margin: 4px 11px 0 4px;
}
.titlebar-main {
    flex: 1;
}
.menu {
    display: flex;
    gap: 17px;
    height: 18px;
    margin-bottom: 1px;
    padding: 0 1px;
}
.asset-tab {
    display: flex;
    align-items: center;
    width: fit-content;
    height: 23px;
    padding: 0 8px 0 6px;
    gap: 6px;
    border-radius: 4px 4px 0 0;
    background-color: #242424;
    color: #e0e0e0;
}
.asset-tab .close {
    margin-left: -2px;
}
.close svg {
    width: 7px;
    height: 7px;
    color: #ccc;
}
.titlebar-right {
    display: flex;
    flex-direction: column;
    align-items: flex-end;
    padding-right: 11px;
}
.window-buttons {
    display: flex;
    gap: 21px;
    height: 18px;
}
.window-buttons svg {
    width: 10px;
    height: 10px;
}
.parent-class {
    padding-top: 5px;
    color: #777;
}
.parent-class a, .tree a {
    color: #c8c8c8;
    text-decoration: none;
    border-bottom: 1px solid #888;
    line-height: 11px;
}
.parent-class a {
    margin-left: 2px;
}

/* Toolbar */
.toolbar {
    display: flex;
    align-items: center;
    height: 31px;
    flex: none;
    background-color: #242424;
}
.tool-group {
    display: flex;
    align-items: center;
    height: 27px;
    border-right: 1px solid #151515;
}
.tool-group button {
    gap: 2px;
}
.tool-group svg {
    width: 16px;
    height: 15px;
}
.tool-group .dots svg {
    width: 4px;
    height: 13px;
}
.tool-group .chev {
    width: 10px;
    height: 10px;
}
.files {
    padding: 0 12px;
    gap: 17px;
}
.compile {
    padding: 0 8px 0 12px;
    gap: 7px;
}
.diff {
    padding: 0 10px 0 9px;
}
.find {
    padding: 0 7px 0 12px;
    gap: 8px;
}
.find .hide {
    margin-left: 6px;
}
.settings {
    padding: 0 7px 0 12px;
    gap: 16px;
}
.playing {
    padding: 0 8px 0 14px;
}
.play-box {
    display: flex;
    height: 22px;
    padding-left: 6px;
    gap: 8px;
    border-radius: 3px;
    background-color: #363636;
}
.play-box svg {
    width: 13px;
    height: 13px;
}
.play-box .dots {
    padding: 0 6px;
    border-left: 1px solid #242424;
}
.debug {
    padding-left: 12px;
    gap: 3px;
    border: 0;
}
.select {
    appearance: none;
    background: #0f0f0f url("data:image/svg+xml,%3Csvg xmlns='http://www.w3.org/2000/svg' viewBox='0 0 10 10'%3E%3Cpath d='M1 3l4 4 4-4' fill='none' stroke='%23c0c0c0' stroke-width='1.500'/%3E%3C/svg%3E") no-repeat right 7px center / 8px 8px;
    border: 1px solid #363636;
    border-radius: 3px;
}
.debug-select {
    width: 156px;
    height: 22px;
    padding-left: 4px;
    background-position: right 4px center;
}

/* Layout */
.workspace {
    display: flex;
    flex: 1;
    min-height: 0;
    gap: 4px;
    padding: 3px;
}
.left {
    display: flex;
    flex-direction: column;
    width: 286px;
    flex: none;
    gap: 4px;
}
.right {
    display: flex;
    flex-direction: column;
    flex: 1;
    min-width: 0;
    gap: 5px;
}
.upper {
    display: flex;
    flex: 1;
    gap: 3px;
    min-height: 0;
}

/* Tabs */
.tabs {
    display: flex;
    height: 19px;
    flex: none;
}
.tab {
    display: flex;
    align-items: center;
    height: 19px;
    padding: 0 4px;
    gap: 4px;
    border-radius: 4px 4px 0 0;
}
.tab.active {
    background-color: #242424;
}
.tab .close {
    margin-left: auto;
}
.side-tab {
    width: 120px;
    padding: 0 10px 0 4px;
}
.doc-tab {
    width: 120px;
    margin-right: 2px;
}
.current {
    color: #e8e8e8;
    border-top: 1px solid #1d4c80;
    padding-right: 11px;
}

/* Side panels */
.panel {
    display: flex;
    flex-direction: column;
}
.components {
    height: 504px;
    background-color: #1a1a1a;
}
.blueprint {
    flex: 1;
    background-color: #1a1a1a;
}
.panel > .tabs, .details > .tabs, .results > .tabs {
    background-color: #151515;
}
.panel-head {
    display: flex;
    align-items: center;
    height: 25px;
    padding: 0 5px 4px 4px;
    background-color: #242424;
    border-bottom: 1px solid #151515;
}
.blueprint .panel-head {
    height: 28px;
}
.add {
    width: 50px;
    height: 18px;
    justify-content: center;
    gap: 4px;
    border: 1px solid #404040;
    border-radius: 3px;
    background-color: #363636;
    color: #eee;
    font-weight: 500;
}
.add svg {
    width: 10px;
    height: 10px;
    color: #8bc34a;
}
.search {
    display: flex;
    align-items: center;
    flex: 1;
    height: 17px;
    margin-left: 8px;
    padding-left: 4px;
    gap: 5px;
    border: 1px solid #333;
    border-radius: 9px;
    background-color: #0f0f0f;
}
.blueprint .search {
    margin-left: 4px;
    padding-left: 2px;
}
.search svg {
    width: 12px;
    height: 12px;
}
.search input {
    flex: 1;
    outline: none;
}
.search input::placeholder, .console input::placeholder {
    color: #555;
    opacity: 1;
}
.gear {
    margin-left: 4px;
}
.gear svg {
    width: 13px;
    height: 13px;
}

/* Component tree */
.tree {
    padding: 2px 3px;
}
.tree li {
    display: flex;
    align-items: center;
    height: 18px;
    padding: 0 1px 0 22px;
    gap: 4px;
}
.tree li.self {
    padding-left: 3px;
    gap: 5px;
    background-color: #2b323d;
}
.tree li.alt {
    background-color: #161616;
}
.tree li.level-1 {
    padding-left: 12px;
    gap: 3px;
}
.tree li.level-2 {
    padding-left: 30px;
}
.tree li.child {
    padding-left: 23px;
}
.tree li.selected {
    background-color: #40566f;
    color: #fff;
}
.tree li.split {
    height: 1px;
    margin: 4px 0;
    background-color: #4a4a4a;
}
.tree a {
    margin-left: auto;
}
.arrow {
    width: 8px;
    height: 5px;
    color: #777;
}

/* My Blueprint categories */
.cat {
    display: flex;
    align-items: center;
    height: 21px;
    margin-bottom: 1px;
    padding: 0 5px 0 4px;
    gap: 3px;
    background-color: #2f2f2f;
    font-size: 9px;
}
.cat.tall {
    height: 24px;
}
.cat.no-arrow {
    padding-left: 14px;
}
.cat h2 {
    flex: 1;
}
.cat small {
    font-size: 9px;
    font-weight: 400;
    color: #777;
}
.cat svg:last-child {
    width: 12px;
    height: 12px;
}
.cat svg.arrow {
    width: 8px;
    height: 5px;
}
.cat-list li {
    display: flex;
    align-items: center;
    height: 19px;
    gap: 3px;
}
.graph-row {
    padding-left: 3px;
}
.event-row {
    padding-left: 22px;
}
.func-row {
    padding-left: 14px;
}
.cat-list .graph-row .icon, .cat-list .event-row .icon {
    width: 11px;
    height: 11px;
}
.cat-list.vars li {
    height: 15px;
}
.cat-list .var-cat {
    padding-left: 2px;
    font-weight: 700;
    font-size: 9px;
}
.cat-list .var-row {
    padding-left: 22px;
}
.var-row span {
    width: 154px;
}
.var-type {
    width: 9px;
    height: 5px;
    border-radius: 2px;
    background-color: #12a5f0;
}

/* Graph */
.graph-area {
    display: flex;
    flex-direction: column;
    flex: 1;
    min-width: 0;
}
.canvas {
    position: relative;
    flex: 1;
    overflow: hidden;
    background-color: #262626;
}
.grid, .wires, .vignette {
    position: absolute;
    inset: 0;
    width: 100%;
    height: 100%;
}
.comment {
    position: absolute;
    left: 24px;
    right: -20px;
    top: -20px;
    height: 742px;
    border: 2px solid rgba(0, 0, 0, 0.5);
    background-color: rgba(255, 255, 255, 0.03);
}
.vignette {
    box-shadow: inset 0 0 36px rgba(0, 0, 0, 0.4);
}
.headline {
    position: absolute;
    left: 40px;
    top: 88px;
    color: #fff22f;
    font-family: "Open Sans", "Noto Sans", sans-serif;
    font-size: 48px;
    line-height: 65px;
    white-space: nowrap;
}
.watermark {
    position: absolute;
    right: 9px;
    bottom: 5px;
    color: rgba(150, 150, 150, 0.35);
    font-family: "Roboto Condensed", "Liberation Sans Narrow", Roboto, sans-serif;
    font-size: 48px;
    font-weight: 700;
    line-height: 60px;
}
.comment-title {
    position: absolute;
    left: 32px;
    top: 3px;
    color: rgba(150, 150, 150, 0.6);
    font-size: 15px;
    font-weight: 700;
    line-height: 18px;
    white-space: nowrap;
}
.crumbs {
    position: absolute;
    inset: 0 0 auto 0;
    display: flex;
    align-items: center;
    height: 28px;
    padding: 0 5px;
    gap: 9px;
    background-color: rgba(10, 10, 10, 0.75);
    color: #8c8c8c;
    font-size: 14px;
}
.crumbs .mark {
    width: 10px;
    height: 13px;
    color: #ccc;
}
.crumbs .chev {
    width: 9px;
    margin-left: 3px;
    color: #ccc;
}
.history {
    padding-left: 7px;
    color: #707070;
}
.history svg {
    width: 14px;
    height: 9px;
}
.next svg {
    transform: scaleX(-1);
}
.crumb-icon {
    width: 16px;
    height: 14px;
    margin-left: 8px;
    color: #aaa;
}
.crumb-sep {
    width: 8px;
    height: 12px;
}
.zoom {
    margin-left: auto;
    color: #3c3c3c;
    font-weight: 500;
}

/* Nodes */
.node {
    position: absolute;
    border: 1px solid #070907;
    border-radius: 5px;
    background-color: rgba(12, 15, 12, 0.93);
    box-shadow: 0 1px 4px #000;
    color: #dcdcdc;
    font-size: 9px;
    line-height: 11px;
}
.node header {
    display: flex;
    align-items: center;
    height: 16px;
    padding: 0 6px;
    gap: 4px;
    border-radius: 4px 4px 0 0;
    background: linear-gradient(100deg, #4a7a9c, #2a5877 30%, #1f4059 50%, #285573 65%, #202f3a 90%);
    box-shadow: inset 0 1px 0 rgba(170, 210, 240, 0.4);
}
.node header.two {
    height: 27px;
    align-items: flex-start;
    padding-top: 2px;
    background: radial-gradient(ellipse 50px 14px at 60% 60%, #122c40, rgba(18, 44, 64, 0)), linear-gradient(100deg, #4c7b9b 10%, #2f5f80 35%, #24485f 60%, #2c4a5c);
}
.node h3 {
    color: #c6ccd0;
    font-weight: 700;
}
.node header p {
    color: #869490;
    font-style: italic;
}
.fn {
    width: 8px;
    height: 10px;
    color: #52b0e8;
}
.pins {
    padding: 3px 8px 0;
}
.pin {
    display: flex;
    align-items: center;
    height: 20px;
    gap: 3px;
}
.pin.end {
    justify-content: flex-end;
}
.pin.reset {
    height: 23px;
}
.pin.stacked {
    height: 34px;
}
.pin.stacked .pin-value {
    display: block;
    margin: 0 0 0 4px;
}
.push {
    margin-left: auto;
}
.exec {
    width: 8px;
    height: 10px;
}
.dot {
    width: 10px;
    height: 10px;
}
.green {
    color: #2fae1f;
}
.sky {
    color: #12a5f0;
}
.red {
    color: #8e0a0a;
}
.pin-value {
    width: 19px;
    height: 13px;
    border: 1px solid #b8b8b8;
    text-align: center;
}
.pin-check {
    appearance: none;
    width: 11px;
    height: 11px;
    border: 1px solid #333;
    border-radius: 2px;
    background-color: #141414;
}
.clock {
    position: absolute;
    right: -7px;
    top: -9px;
    width: 16px;
    height: 16px;
}
.delegate {
    width: 7px;
    height: 7px;
    margin-left: auto;
    border: 2px solid #f03c3c;
    border-radius: 2px;
}
.n-event {
    left: 45px;
    top: 310px;
    width: 107px;
    height: 42px;
}
.n-event header {
    padding: 0 4px;
    gap: 3px;
    background: linear-gradient(100deg, #98191c, #7c1517 50%, #4a1415);
    box-shadow: inset 0 1px 0 rgba(255, 190, 190, 0.4);
}
.n-delay {
    left: 193px;
    top: 312px;
    width: 154px;
    height: 64px;
}
.n-delay header {
    height: 15px;
}
.n-delay .pins {
    padding-top: 1px;
}
.n-delay .pin {
    height: 22px;
}
.n-register-1 {
    left: 423px;
    top: 301px;
    width: 145px;
    height: 125px;
}
.n-register-2 {
    left: 738px;
    top: 301px;
    width: 145px;
    height: 125px;
}
.n-activate {
    left: 1022px;
    top: 301px;
    width: 143px;
    height: 95px;
}
.pill {
    position: absolute;
    display: flex;
    align-items: center;
    justify-content: flex-end;
    width: 86px;
    height: 25px;
    padding: 0 9px 2px 0;
    gap: 2px;
    border: 1px solid #0a0a0a;
    border-radius: 8px;
    background: radial-gradient(ellipse 42px 20px at 45% 0, rgba(58, 140, 180, 0.8), rgba(25, 75, 100, 0.5) 60%, transparent), linear-gradient(#5a5f62, #24282a 40%, #141617 80%, #26292b);
    box-shadow: inset 0 1px 0 rgba(255, 255, 255, 0.3), 0 1px 3px #000;
    color: #e4e4e4;
    font-size: 9px;
}
.p-so-1 {
    left: 276px;
    top: 406px;
}
.p-move {
    left: 255px;
    top: 438px;
    width: 117px;
}
.p-so-2 {
    left: 623px;
    top: 343px;
}
.p-mesh {
    left: 623px;
    top: 375px;
}
.p-so-3 {
    left: 917px;
    top: 354px;
}

/* Details */
.details {
    display: flex;
    flex-direction: column;
    width: 392px;
    flex: none;
    font-size: 9px;
}
.details .tab {
    font-size: 10px;
}
.details-body {
    flex: 1;
    background-color: #242424;
}
.details-head {
    display: flex;
    align-items: center;
    height: 28px;
    padding: 0 2px 0 7px;
    gap: 5px;
}
.details-head .search {
    margin: 0 5px 0 0;
    padding-left: 2px;
    font-size: 10px;
}
.details-head svg {
    width: 14px;
    height: 14px;
}
.details-head svg.small, .details-head .search svg {
    width: 12px;
    height: 12px;
}
.group, .advanced {
    display: flex;
    align-items: center;
    height: 21px;
    padding: 0 4px;
    gap: 5px;
    border-bottom: 1px solid #1a1a1a;
    background-color: #2f2f2f;
    font-weight: 700;
}
.group svg, .advanced svg {
    width: 8px;
    height: 6px;
    color: #909090;
}
.group.folded svg, .advanced svg {
    height: 8px;
}
.group.folded svg.open {
    height: 6px;
}
.advanced {
    height: 20px;
    background: none;
    font-weight: 400;
}
.group.folded {
    height: 20px;
}
.prop {
    display: grid;
    grid-template-columns: 170px 1fr 16px;
    height: 20px;
    border-bottom: 1px solid #1a1a1a;
}
.prop::after {
    content: "";
    border-left: 1px solid #1c1c1c;
}
.prop > label, .prop > span {
    padding-left: 17px;
    line-height: 19px;
    white-space: nowrap;
}
.prop > div {
    display: flex;
    align-items: center;
    padding-left: 8px;
    border-left: 1px solid #1c1c1c;
}
.field, .category-box {
    width: 94px;
    height: 15px;
    padding: 0 6px;
    border: 1px solid #363636;
    border-radius: 3px;
    background-color: #0f0f0f;
}
.category-box {
    display: flex;
    padding: 0 0 0 5px;
}
.category-box input {
    width: 59px;
    padding-left: 6px;
    border: 1px solid #363636;
    border-width: 0 1px;
    border-radius: 3px;
}
.category-box button {
    padding-left: 7px;
}
.category-box svg {
    width: 9px;
    height: 9px;
}
.check {
    appearance: none;
    width: 13px;
    height: 13px;
    border: 1px solid #363636;
    border-radius: 2px;
    background-color: #0f0f0f;
}
.check:checked {
    background: #0f0f0f url("data:image/svg+xml,%3Csvg xmlns='http://www.w3.org/2000/svg' viewBox='0 0 12 12'%3E%3Cpath d='M2 6l3 3 5-6' fill='none' stroke='%23258bf0' stroke-width='1.800'/%3E%3C/svg%3E") center / 11px 11px no-repeat;
}
.socket {
    width: 55px;
    height: 18px;
    padding-left: 6px;
    border-radius: 3px;
    background-color: #2f2f2f;
}
.mini {
    width: 20px;
    justify-content: center;
}
.mini svg {
    width: 12px;
    height: 12px;
}
.prop.curve {
    height: 43px;
}
.prop.curve > label {
    line-height: 42px;
}
.thumb {
    width: 37px;
    height: 37px;
}
.curve-pick {
    margin-left: 7px;
}
.curve-pick > div {
    display: flex;
    height: 20px;
    align-items: center;
}
.curve-select {
    width: 143px;
    height: 16px;
    padding-left: 4px;
}
.count {
    width: 90px;
}
.prop.event > span {
    display: flex;
    align-items: center;
    gap: 4px;
}
.prop.event > div {
    padding-left: 34px;
    border: 0;
}
.prop.event svg {
    width: 12px;
    height: 12px;
    color: #eee;
}
.bind {
    width: 33px;
    height: 16px;
    justify-content: center;
    border: 1px solid #404040;
    border-radius: 2px;
    background-color: #363636;
}
.prop.event .bind svg {
    width: 10px;
    height: 10px;
}

/* Compiler results */
.results {
    display: flex;
    flex-direction: column;
    height: 125px;
    flex: none;
}
.results-tab {
    width: 120px;
    padding-right: 10px;
}
.find-tab {
    padding-left: 5px;
}
.results .tab .icon {
    width: 12px;
    height: 13px;
}
.results-body {
    display: flex;
    flex: 1;
    align-items: flex-end;
    justify-content: flex-end;
    padding: 0 12px 12px;
    background-color: #1a1a1a;
}
.clear {
    width: 55px;
    height: 15px;
    justify-content: center;
    border-radius: 2px;
    background-color: #333;
    color: #757575;
}

/* Status bars */
.status {
    display: flex;
    align-items: stretch;
    height: 25px;
    flex: none;
    margin: 0 3px 3px 0;
    background-color: #242424;
}
.status.main-window {
    margin: 0 4px 1px 2px;
}
.status button {
    padding: 0 7px 0 8px;
    gap: 2px;
    border-right: 1px solid #151515;
}
.status svg {
    width: 12px;
    height: 13px;
}
.status .chev {
    width: 9px;
    height: 9px;
    margin-left: 2px;
}
.console, .trace, .stats, .status-end {
    display: flex;
    align-items: center;
    border-right: 1px solid #151515;
}
.console {
    padding: 0 5px 0 2px;
}
.status .console button, .status .trace button, .status .stats button {
    border: 0;
}
.console input {
    width: 224px;
    height: 16px;
    padding: 0 6px;
    border: 1px solid #363636;
    border-radius: 3px;
    background-color: #0f0f0f;
    font-family: "Liberation Mono", monospace;
    font-size: 9px;
}
.status-end {
    align-items: stretch;
    margin-left: auto;
    border-left: 1px solid #151515;
    border-right: 0;
}
.status-end > button {
    padding: 0 9px;
}
.trace {
    padding-right: 4px;
}
.status .trace button:nth-child(n+2) {
    padding: 0 3px;
}
.status .derived {
    padding-right: 15px;
}
.status .derived .chev {
    margin-left: 6px;
}
.stats {
    padding: 0 4px 0 6px;
}
.status .stats button {
    padding-right: 4px;
}
.status svg.more {
    width: 4px;
    height: 12px;
}
.status .status-end > button:last-child {
    border: 0;
}
```
